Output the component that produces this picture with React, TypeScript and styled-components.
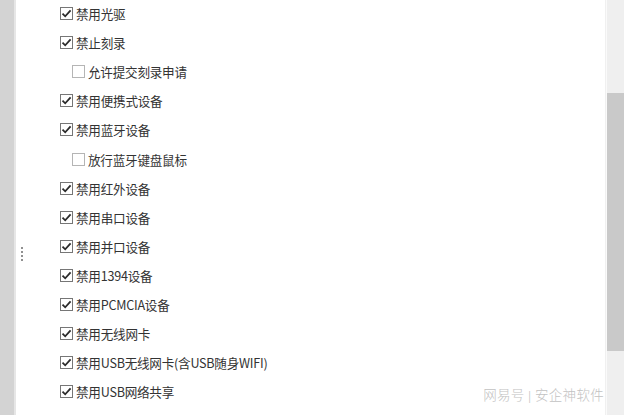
import React from 'react';
import styled, { createGlobalStyle } from 'styled-components';

const GlobalStyle = createGlobalStyle`
	html, body {
		margin: 0;
		padding: 0;
		overflow: hidden;
		background: #fff;
	}
`;

type Option = { label: string; checked: boolean; child?: boolean };

const options: Option[] = [
	{ label: '禁用光驱', checked: true },
	{ label: '禁止刻录', checked: true },
	{ label: '允许提交刻录申请', checked: false, child: true },
	{ label: '禁用便携式设备', checked: true },
	{ label: '禁用蓝牙设备', checked: true },
	{ label: '放行蓝牙键盘鼠标', checked: false, child: true },
	{ label: '禁用红外设备', checked: true },
	{ label: '禁用串口设备', checked: true },
	{ label: '禁用并口设备', checked: true },
	{ label: '禁用1394设备', checked: true },
	{ label: '禁用PCMCIA设备', checked: true },
	{ label: '禁用无线网卡', checked: true },
	{ label: '禁用USB无线网卡(含USB随身WIFI)', checked: true },
	{ label: '禁用USB网络共享', checked: true },
];

const Frame = styled.div`
	position: relative;
	display: flex;
	width: 624px;
	height: 415px;
	overflow: hidden;
	font-family: 'Noto Sans CJK SC', 'Noto Sans', sans-serif;
`;

const Gutter = styled.div`
	flex: 0 0 14px;
	background: #d3d3d3;
	border-right: 2px solid #e6e6e6;
`;

const Panel = styled.div`
	flex: 1;
	display: flex;
	background: #fff;
	border-right: 1px solid #f0f0f0;
`;

// drag handle on the left edge of the panel
const Handle = styled.div`
	flex: 0 0 2px;
	display: flex;
	flex-direction: column;
	gap: 2px;
	margin-left: 5px;
	padding-top: 247px;
`;

const Dot = styled.span`
	width: 2px;
	height: 2px;
	border-radius: 50%;
	background: #6b6b6b;
`;

const List = styled.ul`
	list-style: none;
	margin: -1px 0 0;
	padding: 0 0 0 37px;
`;

const Row = styled.li<{ $child?: boolean }>`
	display: flex;
	align-items: center;
	height: 29.1px;
	padding-left: ${p => (p.$child ? 12 : 0)}px;
	font-size: 12.6px;
	color: #333;
	letter-spacing: -0.25px;
`;

const Box = styled.span<{ $checked: boolean }>`
	display: inline-flex;
	align-items: center;
	justify-content: center;
	box-sizing: border-box;
	width: 13px;
	height: 13px;
	margin-right: 3px;
	border: 1px solid ${p => (p.$checked ? '#767676' : '#b5b5b5')};
	background: #fff;
`;

const Scrollbar = styled.div`
	flex: 0 0 17px;
	background: #efefef;
	border-left: 1px solid #fafafa;
`;

const Thumb = styled.div`
	margin-top: 93px;
	height: 258px;
	background: #c9c9c9;
`;

const Watermark = styled.div`
	position: absolute;
	right: 20px;
	bottom: 11px;
	font-family: 'Liberation Serif', 'Noto Sans CJK SC', serif;
	font-size: 13.5px;
	font-weight: 300;
	color: #c2c2c2;
	letter-spacing: 0.3px;
`;

const Check = () => (
	<svg width="11" height="11" viewBox="0 0 11 11">
		<path d="M1.5 5.6 L4.2 8.3 L9.6 2.4" fill="none" stroke="#2b2b2b" strokeWidth="1.8" />
	</svg>
);

export default function App() {
	return (
		<>
			<GlobalStyle />
			<Frame>
				<Gutter />
				<Panel>
					<Handle>
						<Dot />
						<Dot />
						<Dot />
						<Dot />
					</Handle>
					<List>
						{options.map(o => (
							<Row key={o.label} $child={o.child}>
								<Box $checked={o.checked}>{o.checked && <Check />}</Box>
								{o.label}
							</Row>
						))}
					</List>
				</Panel>
				<Scrollbar>
					<Thumb />
				</Scrollbar>
				<Watermark>网易号 | 安企神软件</Watermark>
			</Frame>
		</>
	);
}
